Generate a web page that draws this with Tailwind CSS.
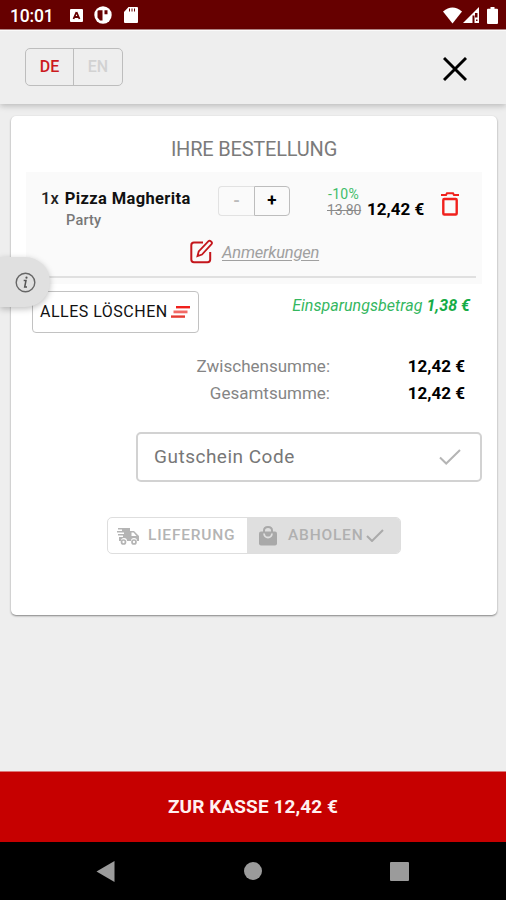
<!DOCTYPE html>
<html lang="de">
<head>
<meta charset="utf-8">
<meta name="viewport" content="width=device-width, initial-scale=1">
<title>Ihre Bestellung</title>
<script src="https://cdn.jsdelivr.net/npm/@tailwindcss/browser@4"></script>
</head>
<body class="font-[Roboto,sans-serif]">
<div class="relative flex h-[900px] w-[506px] flex-col overflow-hidden bg-[#eeeeee] text-black">
  <!-- Status bar -->
  <div class="flex h-[30px] shrink-0 items-center border-b border-[#b98a8a] bg-[#660000] pl-[10px] pr-[8px] pt-px text-white">
    <span class="w-[60px] pt-[3px] text-[17.5px] font-medium tracking-[-0.200px] leading-none whitespace-nowrap">10:01</span>
    <svg class="h-[13px] w-[13px]" viewBox="0 0 13 13"><rect width="13" height="13" rx="1" fill="#fff"/><path d="M6.5 3 L9.5 10 M6.5 3 L3.5 10 M4.7 8h3.6" stroke="#660000" stroke-width="1.8" fill="none"/></svg>
    <svg class="ml-[11px] h-[18px] w-[18px]" viewBox="0 0 18 18"><circle cx="9" cy="9" r="8.7" fill="#fff"/><path d="M4.500 4.200H8.500v10.300H6L3.500 11.500V5z M10.500 4.200h3v4h-3z" fill="#660000"/></svg>
    <svg class="ml-[12px] h-[16px] w-[14px]" viewBox="0 0 14 16"><path d="M4.500 0H13q1 0 1 1v14q0 1-1 1H1q-1 0-1-1V5z" fill="#fff"/><path d="M5.500 1.500v3M8 1.500v3M10.500 1.500v3" stroke="#660000" stroke-width="1"/></svg>
    <div class="flex-1"></div>
    <svg class="h-[17px] w-[19px]" viewBox="0 0 19 17"><path d="M0 4.500Q9.500-3.500 19 4.500L9.500 16.500z" fill="#fff"/></svg>
    <svg class="ml-px h-[16px] w-[16px]" viewBox="0 0 16 16"><path d="M16 0v16H0z" fill="#fff"/><path d="M9.500 16V8.500h2V16M12 6h2.500v4.500H12zM13 12.500h1.500V14H13z" fill="#660000"/></svg>
    <svg class="ml-[8px] h-[17px] w-[11px]" viewBox="0 0 11 17"><path d="M3.500 0h4v1.700H10q1 0 1 1V16q0 1-1 1H1q-1 0-1-1V2.700q0-1 1-1h2.500z" fill="#fff"/></svg>
  </div>

  <!-- App bar -->
  <header class="flex h-[74px] shrink-0 items-start justify-between border-t border-[#fafafa] bg-[#eeeeee] pl-[25px] pr-[39px] pt-[17px] shadow-[0_2px_6px_rgba(0,0,0,0.22)]">
    <div class="flex h-[38px] w-[98px] rounded-[5px] border border-[#bdbdbd] text-[16px] leading-[36px]">
      <div class="w-[48px] border-r border-[#bdbdbd] text-center font-medium text-[#cc1a20]">DE</div>
      <div class="flex-1 text-center font-medium text-[#d2d2d2]">EN</div>
    </div>
    <svg class="mt-[9px] h-[24px] w-[24px]" viewBox="0 0 24 24"><path d="M1 1L23 23M23 1L1 23" stroke="#000" stroke-width="2.900" fill="none"/></svg>
  </header>

  <!-- Order card -->
  <main class="ml-[11px] mt-[12px] flex h-[499px] w-[486px] shrink-0 flex-col rounded-[5px] bg-white px-[15px] shadow-[0_1px_2px_rgba(0,0,0,0.45)]">
    <h1 class="mt-[20px] h-[36px] text-center text-[20px] leading-[27px] tracking-[-0.200px] text-[#7b7b7b]">IHRE BESTELLUNG</h1>

    <section class="h-[112px] bg-[#fafafa] pl-[15px]">
      <div class="flex h-[62px]">
        <div class="w-[177px] pt-[15px] whitespace-nowrap">
          <p class="text-[16.500px] font-bold leading-[24px] tracking-[0.370px] text-[#111]"><span class="mr-[6px] font-medium tracking-normal text-[#222]">1x</span>Pizza Magherita</p>
          <p class="pl-[25px] text-[14.500px] font-medium leading-[20px] tracking-[0.200px] text-[#777]">Party</p>
        </div>
        <div class="mt-[14px] flex h-[30px] w-[72px] text-center text-[17px] font-bold leading-[27px]">
          <div class="w-[36px] rounded-l-[4px] border border-r-0 border-[#e2e2e2] text-[#bbb]">-</div>
          <div class="w-[36px] rounded-r-[4px] border border-[#bdbdbd]">+</div>
        </div>
        <div class="ml-[37px] mt-[13px] w-[40px] pt-px text-[14px] leading-[17px] whitespace-nowrap">
          <p class="pl-px tracking-[0.300px] text-[#3fbd69]">-10%</p>
          <p class="-mt-px tracking-[-0.200px] text-[#8a8a8a] line-through">13.80</p>
        </div>
        <div class="mt-[25px] w-[60px] text-[17px] font-bold leading-[24px] whitespace-nowrap">12,42 €</div>
        <svg class="ml-[14px] mt-[20px] h-[24px] w-[18px]" viewBox="0 0 18 24"><path d="M0 3H5L6 1.200H12L13 3H18" stroke="#f0201c" stroke-width="2" fill="none"/><rect x="2.300" y="7" width="13.400" height="15.500" rx="1" stroke="#f0201c" stroke-width="2.400" fill="none"/></svg>
      </div>
      <div class="mr-[6px] flex h-[44px] items-start border-b-2 border-[#e0e0e0] pl-[149px] pt-[5px]">
        <svg class="h-[25px] w-[23px]" viewBox="0 0 23 25"><path d="M13 3.500H4Q1.300 3.500 1.300 6.200V20.500Q1.300 23.200 4 23.200H17.500Q20.200 23.200 20.200 20.500V13" stroke="#c4161c" stroke-width="2" fill="none"/><path d="M7.500 17L8.700 12.500L18.500 2.200Q19.500 1.200 20.700 2.200L21.500 3Q22.500 4 21.500 5.200L12 15.500Z" stroke="#c4161c" stroke-width="1.800" fill="#fafafa"/></svg>
        <span class="ml-[9px] pt-[2px] text-[16.500px] italic leading-[24px] tracking-[-0.200px] text-[#a0a0a0] underline underline-offset-2">Anmerkungen</span>
      </div>
    </section>

    <div class="flex h-[66px] justify-between pl-[6px] pr-[12px]">
      <button class="mt-[7px] flex h-[42px] w-[167px] items-center rounded-[4px] border border-[#c2c2c2] pl-[7px] text-[16px] tracking-[0.500px] whitespace-nowrap text-[#111]">ALLES LÖSCHEN
        <svg class="ml-[3px] h-[12px] w-[19px]" viewBox="0 0 19 12"><path d="M5 1.200H19" stroke="#f0201c" stroke-width="2.400"/><path d="M2.500 5.900H16.500" stroke="#f26a66" stroke-width="2.800"/><path d="M0 10.600H14" stroke="#e53a32" stroke-width="2.400"/></svg>
      </button>
      <p class="pt-[10px] text-[16px] italic leading-[24px] tracking-[0.040px] whitespace-nowrap text-[#35b75f]">Einsparungsbetrag <b class="text-[#16ac46]">1,38 €</b></p>
    </div>

    <dl class="grid h-[82px] grid-cols-[304px_1fr] content-start pt-[3px] pr-[17px] text-right text-[17px] leading-[27px]">
      <dt class="text-[#858585]">Zwischensumme:</dt><dd class="font-bold">12,42 €</dd>
      <dt class="text-[#858585]">Gesamtsumme:</dt><dd class="font-bold">12,42 €</dd>
    </dl>

    <div class="ml-auto flex h-[50px] w-[346px] items-center justify-between rounded-[5px] border-2 border-[#d2d2d2] pl-[16px] pr-[19px]">
      <span class="text-[19px] tracking-[0.500px] text-[#777]">Gutschein Code</span>
      <svg class="h-[16px] w-[22px]" viewBox="0 0 22 16"><path d="M1 8.500L7.200 14.500L21 1" stroke="#b5b5b5" stroke-width="2" fill="none"/></svg>
    </div>

    <div class="mx-auto mt-[35px] flex h-[37px] w-[294px] rounded-[5px] border border-[#dedede] text-[15.500px] font-medium tracking-[0.800px] text-[#b4b4b4]">
      <div class="flex w-[139px] items-center pl-[9px]">
        <svg class="h-[18px] w-[22px]" viewBox="0 0 22 18"><path d="M1 1H13V4H17L22 9V14H20A3 3 0 0 0 14 14H10A3 3 0 0 0 4 14H2V10H6V8.500H1V7H7V5.500H0V4H5V2.500H1z" fill="#b4b4b4"/><path d="M14.500 5.500H16.500L19.500 9H14.500z" fill="#fff"/><g fill="none" stroke="#b4b4b4" stroke-width="1.700"><circle cx="6.500" cy="15" r="2"/><circle cx="17" cy="15" r="2"/></g></svg>
        <span class="ml-[9px] whitespace-nowrap">LIEFERUNG</span>
      </div>
      <div class="flex flex-1 items-center rounded-r-[4px] bg-[#dfdfdf] pl-[12px] text-[#b0b0b0]">
        <svg class="h-[20px] w-[18px]" viewBox="0 0 18 20"><path d="M2 5.500H16Q18 5.500 18 7.500V17.500Q18 19.500 16 19.500H2Q0 19.500 0 17.500V7.500Q0 5.500 2 5.500z" fill="#a9a9a9"/><path d="M5 6V4.500Q5 1 9 1T13 4.500V6" stroke="#a9a9a9" stroke-width="2" fill="none"/><path d="M5 7.500Q5.500 11.500 9 11.500T13 7.500" stroke="#dfdfdf" stroke-width="1.800" fill="none"/></svg>
        <span class="ml-[11px] whitespace-nowrap">ABHOLEN</span>
        <svg class="ml-[3px] h-[13px] w-[18px]" viewBox="0 0 18 13"><path d="M1 7L6 12L17 1" stroke="#aaa" stroke-width="2" fill="none"/></svg>
      </div>
    </div>
  </main>

  <div class="flex-1"></div>

  <!-- Checkout -->
  <button class="h-[71px] shrink-0 border-t border-[#dc7777] bg-[#c60000] pt-px text-center text-[19px] font-bold tracking-[0.100px] text-[#fff0f0]">ZUR KASSE 12,42 €</button>

  <!-- System navigation -->
  <nav class="flex h-[58px] shrink-0 items-center justify-between bg-black pl-[96px] pr-[97px]">
    <svg class="h-[21px] w-[19px]" viewBox="0 0 19 21"><path d="M0.500 10.500L18.500 0V21z" fill="#9b9b9b"/></svg>
    <div class="h-[18px] w-[18px] rounded-full bg-[#9b9b9b]"></div>
    <div class="h-[19px] w-[19px] rounded-[1px] bg-[#9b9b9b]"></div>
  </nav>

  <!-- Floating info tab over the card's left edge -->
  <div class="absolute left-0 top-[257px] flex h-[50px] w-[50px] items-center rounded-r-[25px] bg-[#e0e0e0] pl-[15px] shadow-[0_2px_6px_rgba(0,0,0,0.25)]">
    <svg class="h-[21px] w-[21px]" viewBox="0 0 21 21"><circle cx="10.500" cy="10.500" r="9.300" stroke="#666" stroke-width="1.400" fill="none"/><path d="M8.700 8.500H11L9.700 15H12" stroke="#555" stroke-width="1.500" fill="none"/><circle cx="11.500" cy="5.700" r="1.100" fill="#555"/></svg>
  </div>
</div>
</body>
</html>
